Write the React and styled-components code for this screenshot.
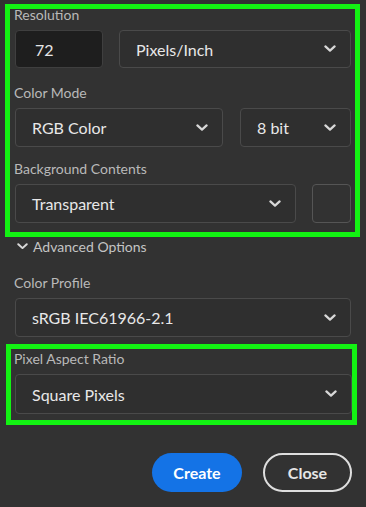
import React from "react";
import styled, { createGlobalStyle } from "styled-components";

const GlobalStyle = createGlobalStyle`
    html, body {
        margin: 0;
        padding: 0;
        background: #323232;
    }
    body {
        font-family: Lato, "Noto Sans", sans-serif;
        color: #dcdcdc;
    }
`;

const Page = styled.div`
    width: 366px;
    height: 507px;
    box-sizing: border-box;
    padding-top: 4px;
    background: #323232;
    overflow: hidden;
`;

const Highlight = styled.div`
    box-sizing: border-box;
    margin-left: ${(p) => p.left}px;
    margin-top: ${(p) => p.top || 0}px;
    width: ${(p) => p.width}px;
    border: 5px solid #13f313;
    padding: 0 ${(p) => p.padRight}px ${(p) => p.padBottom}px ${(p) => p.padLeft}px;
`;

const Plain = styled.div`
    padding: 0 15px;
`;

const Label = styled.div`
    font-size: 14px;
    line-height: 16px;
    height: 16px;
    color: #b9b9b9;
    margin-top: ${(p) => p.top || 0}px;
    margin-left: -1px;
    margin-bottom: 7px;
    white-space: nowrap;
`;

const Row = styled.div`
    display: flex;
    gap: ${(p) => p.gap || 16}px;
`;

const Input = styled.div`
    box-sizing: border-box;
    width: 88px;
    height: 38px;
    background: #1e1e1e;
    border: 1px solid #3f3f3f;
    border-radius: 4px;
    padding-left: 19px;
    display: flex;
    align-items: center;
    font-size: 16px;
    color: #e6e6e6;
`;

const Select = styled.div`
    box-sizing: border-box;
    flex: ${(p) => (p.width ? "none" : 1)};
    width: ${(p) => (p.width ? p.width + "px" : "auto")};
    height: ${(p) => p.height || 39}px;
    border: 1px solid #4a4a4a;
    border-radius: 4px;
    background: #2f2f2f;
    display: flex;
    align-items: center;
    justify-content: space-between;
    padding: 0 14px 0 16px;
    font-size: 16px;
    color: #e8e8e8;
`;

const Swatch = styled.div`
    box-sizing: border-box;
    width: 39px;
    height: 39px;
    border: 1px solid #555;
    border-radius: 4px;
`;

const Disclosure = styled.div`
    display: flex;
    align-items: center;
    gap: 5px;
    height: 16px;
    margin: 1px 0 21px 2px;
    font-size: 14px;
    color: #c4c4c4;
`;

const Footer = styled.div`
    display: flex;
    justify-content: flex-end;
    gap: 21px;
    padding: 28px 14px 0 0;
`;

const Button = styled.div`
    box-sizing: border-box;
    width: ${(p) => p.width}px;
    height: 39px;
    border-radius: 20px;
    display: flex;
    align-items: center;
    justify-content: center;
    font-size: 16px;
    font-weight: 700;
    background: ${(p) => (p.primary ? "#1473e6" : "transparent")};
    border: ${(p) => (p.primary ? "none" : "2px solid #dedede")};
    color: ${(p) => (p.primary ? "#ffffff" : "#e6e6e6")};
`;

function Chevron({ size = 12 }) {
    return (
        <svg width={size} height={size * 0.6} viewBox="0 0 12 7" fill="none">
            <path d="M1.4 1.3L6 5.5L10.6 1.3" stroke="#d8d8d8" strokeWidth="2.2" strokeLinecap="round" strokeLinejoin="round" />
        </svg>
    );
}

function Dropdown({ value, width, height }) {
    return (
        <Select width={width} height={height}>
            <span>{value}</span>
            <Chevron />
        </Select>
    );
}

function App() {
    return (
        <Page>
            <GlobalStyle />
            <Highlight left={5} width={355} padLeft={5} padRight={4} padBottom={9}>
                <Label top={-2}>Resolution</Label>
                <Row gap={16}>
                    <Input>72</Input>
                    <Dropdown value="Pixels/Inch" height={38} />
                </Row>
                <Label top={17}>Color Mode</Label>
                <Row gap={17}>
                    <Dropdown value="RGB Color" width={208} />
                    <Dropdown value="8 bit" />
                </Row>
                <Label top={14}>Background Contents</Label>
                <Row gap={16}>
                    <Dropdown value="Transparent" />
                    <Swatch />
                </Row>
            </Highlight>
            <Plain>
                <Disclosure>
                    <Chevron size={11} />
                    <span>Advanced Options</span>
                </Disclosure>
                <Label>Color Profile</Label>
                <Dropdown value="sRGB IEC61966-2.1" />
            </Plain>
            <Highlight left={6} top={7} width={351} padLeft={4} padRight={0} padBottom={6}>
                <Label top={2}>Pixel Aspect Ratio</Label>
                <Dropdown value="Square Pixels" height={40} />
            </Highlight>
            <Footer>
                <Button primary width={90}>Create</Button>
                <Button width={89}>Close</Button>
            </Footer>
        </Page>
    );
}

export default App;
